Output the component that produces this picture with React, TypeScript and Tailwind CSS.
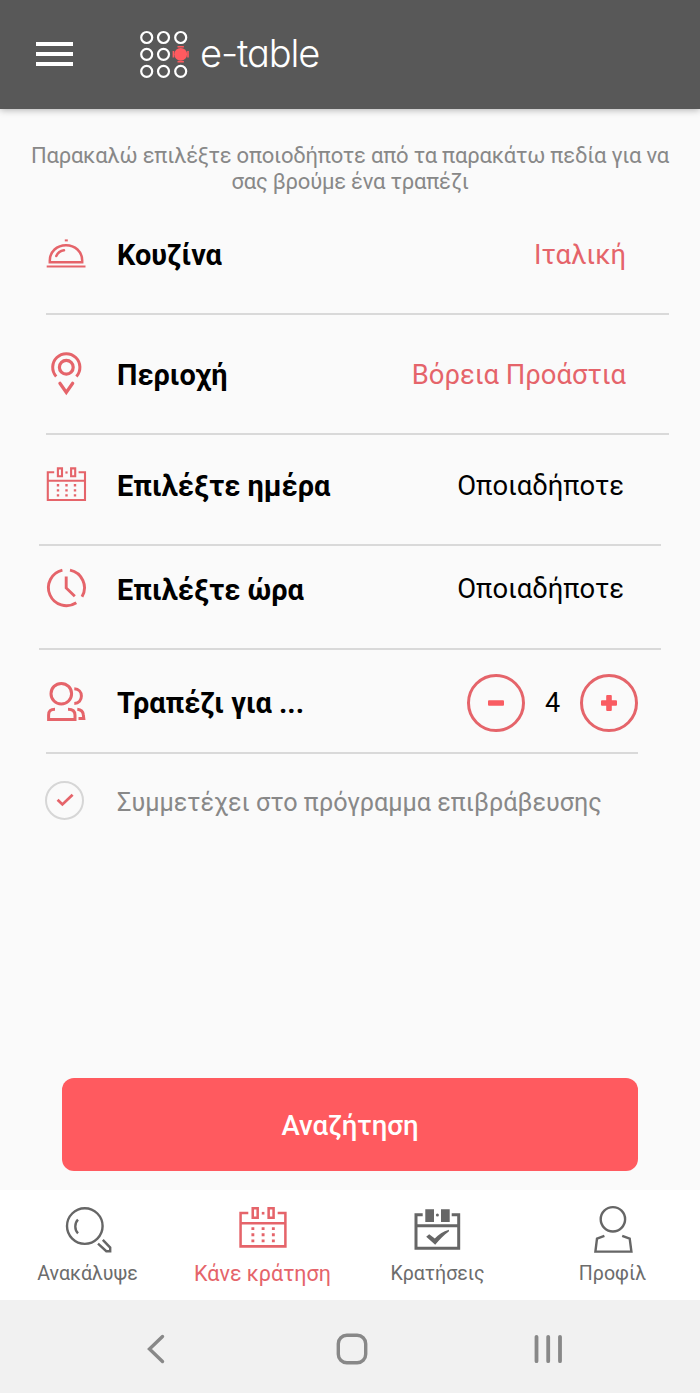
import type { ReactNode } from "react"
import clsx from "clsx"

const RED = "#e5646a"
const GRAY = "#666666"

const LogoMark = () => (
  <svg width="54" height="54" viewBox="0 0 54 54" fill="none">
    {[10.5, 27.3, 44.3].map((y) =>
      [8.7, 25.5, 42.7].map((x) =>
        x === 42.7 && y === 27.3 ? null : (
          <circle
            key={`${x}-${y}`}
            cx={x}
            cy={y}
            r="5.5"
            stroke="#fff"
            strokeWidth="2.2"
          />
        ),
      ),
    )}
    <circle cx="42.7" cy="27.3" r="6.4" fill="#ff5a5f" />
    <path
      d="M39.5 19.8h6.4M39.5 34.8h6.4M35.4 24v6.6M50 24v6.6"
      stroke="#ff5a5f"
      strokeWidth="1.6"
    />
  </svg>
)

const ClocheIcon = () => (
  <svg width="44" height="44" viewBox="0 0 44 44" fill="none" stroke={RED}>
    <path
      d="M5.8 29.2V27.5C5.8 18.5 13 12.2 22 12.2S38.2 18.5 38.2 27.5V29.2Z"
      strokeWidth="2.5"
    />
    <path
      d="M12.3 23C13.6 20 16.4 17.8 20 17.3"
      strokeWidth="2.5"
      strokeLinecap="round"
    />
    <path d="M2.7 33.4H41.5" strokeWidth="2" />
    <path d="M20.8 7.4H23.8" strokeWidth="2" />
  </svg>
)

const PinIcon = () => (
  <svg
    width="44"
    height="44"
    viewBox="0 0 44 44"
    fill="none"
    stroke={RED}
    strokeLinecap="round"
    className="overflow-visible"
  >
    <path
      d="M12.2 23.4A13.6 13.6 0 1 1 32.4 23.4"
      strokeWidth="3"
      strokeLinecap="butt"
    />
    <circle cx="22.3" cy="14.2" r="6.9" strokeWidth="3.2" />
    <path d="M16 30.4L22.3 39.4L28.6 30.4" strokeWidth="3.4" />
  </svg>
)

const CalendarIcon = ({ size = 44 }: { size?: number }) => (
  <svg
    width={size}
    height={size}
    viewBox="0 0 44 44"
    fill="none"
    stroke={RED}
    strokeWidth="2.1"
  >
    <path d="M10.2 8.3H3.8V36H41V8.3H34.6M3.8 16.8H41" />
    <path d="M13.9 4.4H18V12.2H13.9ZM27.1 4.4H31.2V12.2H27.1Z" />
    <path d="M21.4 8.5H23.6" strokeWidth="2.2" />
    <path
      d="M12.8 21.3H15.2M21.3 21.3H23.7M29.8 21.3H32.2M12.8 26.4H15.2M21.3 26.4H23.7M29.8 26.4H32.2M12.8 31.4H15.2M21.3 31.4H23.7M29.8 31.4H32.2"
      strokeWidth="2.4"
    />
  </svg>
)

const ClockIcon = () => (
  <svg
    width="44"
    height="44"
    viewBox="0 0 44 44"
    fill="none"
    stroke={RED}
    strokeWidth="2.9"
  >
    <path d="M26 3.1A18 18 0 0 1 38 29.8" />
    <path d="M32.3 35.7A18 18 0 1 1 18.4 3.1" />
    <path d="M22.2 9.5V21L30.8 29.3" />
  </svg>
)

const PeopleIcon = () => (
  <svg
    width="44"
    height="44"
    viewBox="0 0 44 44"
    fill="none"
    stroke={RED}
    strokeWidth="3"
  >
    <circle cx="17.3" cy="12.7" r="10.3" />
    <path d="M30.3 7.8C34.8 8 37.4 11 37.4 15S34.8 22.2 30.3 22.4" />
    <path d="M11 28.2C6.5 28.2 4.6 30 4.6 34V38.5H31V34C31 30 28.8 28.2 24 28.2" />
    <path d="M33.3 28.2C37.5 28.6 39 30.5 39.3 33.5L39.8 37.5H34.5" />
  </svg>
)

const SearchIcon = () => (
  <svg
    width="50"
    height="50"
    viewBox="0 0 50 50"
    fill="none"
    stroke={GRAY}
    strokeWidth="2.4"
  >
    <circle cx="21.8" cy="23.1" r="17.8" />
    <path d="M15 16.7C11.4 20.2 11.4 26.8 15 30.3" />
    <path d="M35 40.7L43.3 48.2H47.2V44.6L39.8 36.8" />
  </svg>
)

const BookingsIcon = () => (
  <svg
    width="50"
    height="50"
    viewBox="0 0 50 50"
    fill="none"
    stroke={GRAY}
    strokeWidth="3"
  >
    <path d="M9.7 11.8H3V45.3H45.7V11.8H38.7M3 22.7H45.7" />
    <path
      d="M12.3 6.2H21V19H12.3ZM28 6.2H36.7V19H28Z"
      fill={GRAY}
      stroke="none"
    />
    <circle cx="24.4" cy="12" r="1.5" fill={GRAY} stroke="none" />
    <path
      d="M13.2 33.8L16.2 31.2L21.8 35.6C25.5 31.5 30 28.2 36 26.8L35.8 28.5C31 32 26.5 36.5 22.2 41.8Z"
      fill={GRAY}
      stroke="none"
    />
  </svg>
)

const ProfileIcon = () => (
  <svg
    width="50"
    height="50"
    viewBox="0 0 50 50"
    fill="none"
    stroke={GRAY}
    strokeWidth="2.4"
  >
    <circle cx="24.9" cy="16.3" r="12.2" />
    <path d="M16.4 32.8L9 35.6L7.4 48.6H43.4L41.7 35.6L34.2 32.8" />
  </svg>
)

type RowProps = {
  icon: ReactNode
  label: string
  className: string
  children: ReactNode
}

const Row = ({ icon, label, className, children }: RowProps) => (
  <div className={clsx("flex items-center border-[#d9d9d9]", className)}>
    <span className="w-[73px] shrink-0">{icon}</span>
    <span className="flex-1 whitespace-nowrap pt-[3px] text-[28.9px] font-bold text-black">
      {label}
    </span>
    {children}
  </div>
)

const RoundButton = ({ plus }: { plus?: boolean }) => (
  <button className="flex size-[58px] items-center justify-center rounded-full border-[3px] border-[#e5646a]">
    <svg width="18" height="18" viewBox="0 0 18 18" fill="#f95c62">
      <rect x="1" y="6.2" width="16" height="5.6" rx="1" />
      {plus && <rect x="6.2" y="1" width="5.6" height="16" rx="1" />}
    </svg>
  </button>
)

const tabs = [
  { label: "Ανακάλυψε", icon: <SearchIcon /> },
  { label: "Κάνε κράτηση", icon: <CalendarIcon size={53} />, active: true },
  { label: "Κρατήσεις", icon: <BookingsIcon /> },
  { label: "Προφίλ", icon: <ProfileIcon /> },
]

export default function App() {
  return (
    <div className="flex h-[1393px] w-[700px] flex-col overflow-hidden bg-[#fafafa] font-['Roboto',sans-serif]">
      <header className="flex h-[109px] shrink-0 items-center bg-[#585858] pb-px pl-9 shadow-[0_1px_7px_rgba(0,0,0,0.3)]">
        <button className="flex w-[37px] flex-col gap-[6.4px]">
          <span className="h-1 bg-white" />
          <span className="h-1 bg-white" />
          <span className="h-1 bg-white" />
        </button>
        <div className="ml-[65px] flex items-center">
          <LogoMark />
          <span className="ml-2 whitespace-nowrap pb-[3px] font-['Inter',sans-serif] text-[38px] font-light leading-none tracking-[-1.1px] text-white [font-feature-settings:'cv11']">
            e-table
          </span>
        </div>
      </header>

      <main className="flex-1">
        <p className="mt-[34px] text-center text-[22px] leading-[26px] tracking-[-0.22px] text-[#888888]">
          Παρακαλώ επιλέξτε οποιοδήποτε από τα παρακάτω πεδία για να
          <br />
          σας βρούμε ένα τραπέζι
        </p>

        <Row
          icon={<ClocheIcon />}
          label="Κουζίνα"
          className="ml-[46px] mr-[31px] h-[120px] border-b-2 pr-[43px] pt-px [&>span:first-child]:-ml-0.5"
        >
          <span className="pt-[3px] text-[27.4px] text-[#e5646a]">Ιταλική</span>
        </Row>
        <Row
          icon={<PinIcon />}
          label="Περιοχή"
          className="ml-[46px] mr-[31px] h-[120px] border-b-2 pr-[43px] pt-px [&>span:first-child]:-ml-0.5"
        >
          <span className="pt-[3px] text-[27.4px] text-[#e5646a]">
            Βόρεια Προάστια
          </span>
        </Row>
        <Row
          icon={<CalendarIcon />}
          label="Επιλέξτε ημέρα"
          className="ml-[39px] mr-[39px] h-[111px] border-b-2 pb-2 pl-[5px] pr-[37px]"
        >
          <span className="pt-0.5 text-[27.4px] text-black">Οποιαδήποτε</span>
        </Row>
        <Row
          icon={<ClockIcon />}
          label="Επιλέξτε ώρα"
          className="ml-[39px] mr-[39px] h-[104px] border-b-2 pb-4 pl-[5px] pr-[37px]"
        >
          <span className="pt-0.5 text-[27.4px] text-black">Οποιαδήποτε</span>
        </Row>
        <Row
          icon={<PeopleIcon />}
          label="Τραπέζι για ..."
          className="ml-[46px] mr-[62px] h-[104px] border-b-2 pt-[3px] [&>span:first-child]:-ml-0.5"
        >
          <div className="flex items-center">
            <RoundButton />
            <span className="w-[55px] pt-0.5 text-center text-[27px] text-black">
              4
            </span>
            <RoundButton plus />
          </div>
        </Row>

        <label className="ml-[45px] flex h-[92px] items-center">
          <span className="flex size-[39px] items-center justify-center rounded-full border-2 border-[#d6d6d6]">
            <svg
              width="20"
              height="20"
              viewBox="0 0 20 20"
              fill="none"
              stroke={RED}
              strokeWidth="2.8"
            >
              <path d="M2.6 9.8L7.4 14.4L17.6 4.8" />
            </svg>
          </span>
          <span className="ml-[33px] whitespace-nowrap pt-[5px] text-[25.2px] text-[#888888]">
            Συμμετέχει στο πρόγραμμα επιβράβευσης
          </span>
        </label>
      </main>

      <button className="mx-[62px] mb-[19px] h-[93px] shrink-0 rounded-xl bg-[#ff5a5f] pt-[3px] text-[27.6px] font-medium text-white">
        Αναζήτηση
      </button>

      <nav className="grid h-[110px] shrink-0 grid-cols-4 bg-white">
        {tabs.map((tab) => (
          <div key={tab.label} className="flex flex-col items-center pt-[13px]">
            <div className="h-[55px]">{tab.icon}</div>
            <span
              className={clsx(
                "whitespace-nowrap leading-[32px]",
                tab.active
                  ? "text-[21.5px] text-[#e5646a]"
                  : "text-[19.6px] text-[#6c6c6c]",
              )}
            >
              {tab.label}
            </span>
          </div>
        ))}
      </nav>

      <div className="grid h-[93px] shrink-0 grid-cols-3 items-center justify-items-center bg-[#f1f1f1] pl-[58px] pr-[54px] pt-1">
        <svg
          width="32"
          height="32"
          viewBox="0 0 32 32"
          fill="none"
          stroke="#888888"
          strokeWidth="3.4"
          strokeLinecap="round"
        >
          <path d="M22.5 3.5L9.5 16L22.5 28.5" />
        </svg>
        <svg
          width="32"
          height="32"
          viewBox="0 0 32 32"
          fill="none"
          stroke="#888888"
          strokeWidth="3.4"
        >
          <rect x="2.3" y="2.3" width="27.4" height="27.4" rx="8.5" />
        </svg>
        <svg
          width="32"
          height="32"
          viewBox="0 0 32 32"
          fill="none"
          stroke="#888888"
          strokeWidth="3.8"
          strokeLinecap="round"
        >
          <path d="M4.5 3.8V28.2M16.2 3.8V28.2M28 3.8V28.2" />
        </svg>
      </div>
    </div>
  )
}
